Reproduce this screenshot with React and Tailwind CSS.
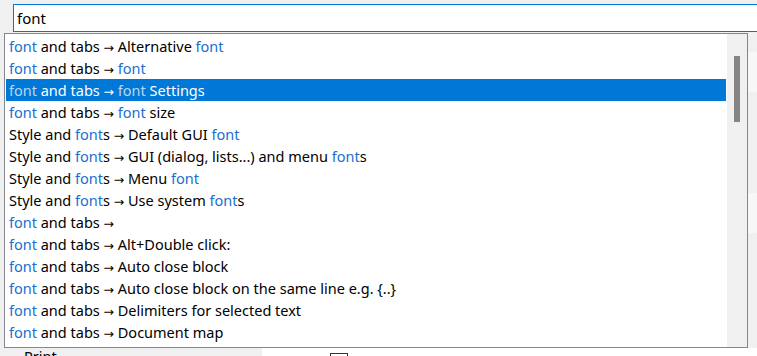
import React from 'react';

const rows = [
  [['font', 1], [' and tabs → Alternative ', 0], ['font', 1]],
  [['font', 1], [' and tabs → ', 0], ['font', 1]],
  [['font', 1], [' and tabs → ', 0], ['font', 1], [' Settings', 0]],
  [['font', 1], [' and tabs → ', 0], ['font', 1], [' size', 0]],
  [['Style and ', 0], ['font', 1], ['s → Default GUI ', 0], ['font', 1]],
  [['Style and ', 0], ['font', 1], ['s → GUI (dialog, lists...) and menu ', 0], ['font', 1], ['s', 0]],
  [['Style and ', 0], ['font', 1], ['s → Menu ', 0], ['font', 1]],
  [['Style and ', 0], ['font', 1], ['s → Use system ', 0], ['font', 1], ['s', 0]],
  [['font', 1], [' and tabs →', 0]],
  [['font', 1], [' and tabs → Alt+Double click:', 0]],
  [['font', 1], [' and tabs → Auto close block', 0]],
  [['font', 1], [' and tabs → Auto close block on the same line e.g. {..}', 0]],
  [['font', 1], [' and tabs → Delimiters for selected text', 0]],
  [['font', 1], [' and tabs → Document map', 0]],
];

const SELECTED = 2;

// the arrow in Noto Sans is tiny; take it from DejaVu like the Windows UI font draws it
function Text({ t }) {
  const bits = t.split('→');
  return bits.map((b, i) => (
    <React.Fragment key={i}>
      {b}
      {i < bits.length - 1 && <span className="text-[12.5px]" style={{ fontFamily: '"DejaVu Sans", sans-serif' }}>→</span>}
    </React.Fragment>
  ));
}

function Row({ parts, selected }) {
  return (
    <div className={`h-[22px] leading-[22px] pl-[3px] whitespace-pre ${selected ? 'bg-[#0078d7] text-white' : 'text-black'}`}>
      {parts.map(([t, m], i) => (
        <span key={i} className={m ? (selected ? 'text-[#b9d6f2]' : 'text-[#1a6fcf]') : ''}><Text t={t} /></span>
      ))}
    </div>
  );
}

export default function App() {
  return (
    <div className="w-[757px] h-[356px] bg-[#f0f0f0] overflow-hidden relative text-[14.5px]"
      style={{ fontFamily: '"Segoe UI", "Noto Sans", sans-serif' }}>
      {/* page behind the popup */}
      <div className="flex flex-col pt-[4px]">
        <div className="pl-[13px]">
          <div className="h-[28px] w-[760px] bg-white border border-[#0078d7] flex items-center pl-[3px] text-[15px] text-black">
            font
          </div>
        </div>
        <div className="flex justify-end pt-[20px]">
          <div className="flex flex-col gap-[101px]">
            <div className="w-[9px] h-[40px] bg-[#f7f7f7]" />
            <div className="w-[9px] h-[40px] bg-[#f7f7f7]" />
          </div>
        </div>
        <div className="flex mt-[115px] h-[20px]">
          <div className="w-[262px] pl-[24px] -mt-[2px] text-black">Print</div>
          <div className="flex-1 bg-white pl-[68px] pt-[5px]">
            <div className="w-[18px] h-[18px] border border-[#333] bg-white" />
          </div>
        </div>
      </div>

      {/* autocomplete popup */}
      <div className="absolute left-[4px] top-[33px] w-[744px] h-[315px] bg-white border border-[#828790] flex">
        <div className="flex-1 p-[1px]">
          {rows.map((r, i) => <Row key={i} parts={r} selected={i === SELECTED} />)}
        </div>
        <div className="w-[20px] bg-[#f0f0f0] pt-[22px] pl-[7px]">
          <div className="w-[6px] h-[66px] bg-[#858585]" />
        </div>
      </div>
    </div>
  );
}
